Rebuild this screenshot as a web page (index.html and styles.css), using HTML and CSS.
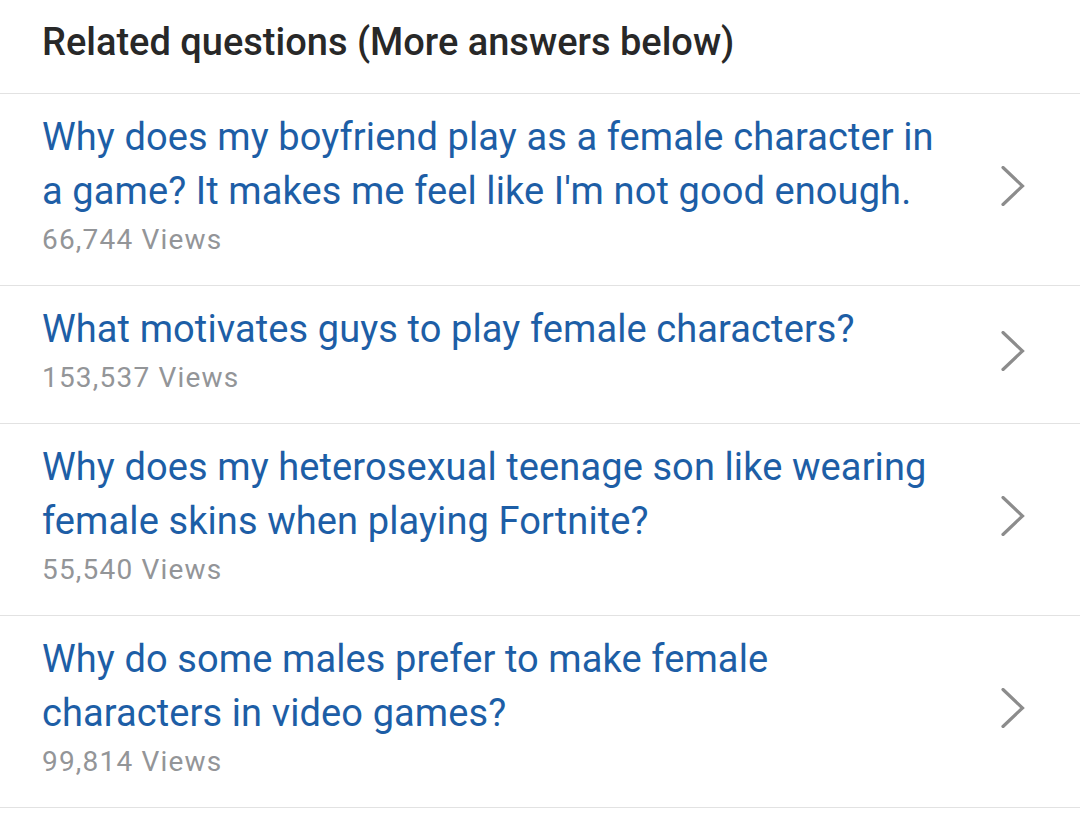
FILE: index.html
```html
<!DOCTYPE html>
<html lang="en">
<head>
    <meta charset="UTF-8">
    <meta name="viewport" content="width=device-width, initial-scale=1.0">
    <title>Related questions</title>
    <link rel="stylesheet" href="styles.css">
</head>
<body>
    <div class="related">
        <h2 class="related-title">Related questions (More answers below)</h2>

        <!-- Question rows -->
        <a class="question" href="#">
            <div class="question-body">
                <div class="question-text">Why does my boyfriend play as a female character in a game? It makes me feel like I'm not good enough.</div>
                <div class="question-views">66,744 Views</div>
            </div>
            <svg class="chevron" width="24" height="40" viewBox="0 0 24 40"><path d="M2 1.5 L21.5 20 L2 38.5" fill="none" stroke="#8c8c8c" stroke-width="3.2" stroke-linecap="round" stroke-linejoin="miter"/></svg>
        </a>

        <a class="question" href="#">
            <div class="question-body">
                <div class="question-text">What motivates guys to play female characters?</div>
                <div class="question-views">153,537 Views</div>
            </div>
            <svg class="chevron" width="24" height="40" viewBox="0 0 24 40"><path d="M2 1.5 L21.5 20 L2 38.5" fill="none" stroke="#8c8c8c" stroke-width="3.2" stroke-linecap="round" stroke-linejoin="miter"/></svg>
        </a>

        <a class="question" href="#">
            <div class="question-body">
                <div class="question-text">Why does my heterosexual teenage son like wearing female skins when playing Fortnite?</div>
                <div class="question-views">55,540 Views</div>
            </div>
            <svg class="chevron" width="24" height="40" viewBox="0 0 24 40"><path d="M2 1.5 L21.5 20 L2 38.5" fill="none" stroke="#8c8c8c" stroke-width="3.2" stroke-linecap="round" stroke-linejoin="miter"/></svg>
        </a>

        <a class="question" href="#">
            <div class="question-body">
                <div class="question-text">Why do some males prefer to make female characters in video games?</div>
                <div class="question-views">99,814 Views</div>
            </div>
            <svg class="chevron" width="24" height="40" viewBox="0 0 24 40"><path d="M2 1.5 L21.5 20 L2 38.5" fill="none" stroke="#8c8c8c" stroke-width="3.2" stroke-linecap="round" stroke-linejoin="miter"/></svg>
        </a>
    </div>
</body>
</html>
```

FILE: styles.css
```css
body {
    font-family: Roboto, "Noto Sans", sans-serif;
    margin: 0;
    background-color: #fff;
}
.related {
    width: 1080px;
}
.related-title {
    margin: 0;
    padding: 16px 42px 0;
    height: 77px;
    font-size: 38px;
    font-weight: 500;
    line-height: 52px;
    color: #282828;
    border-bottom: 1px solid #e2e2e2;
}
.question {
    display: flex;
    align-items: center;
    padding: 16px 55px 23px 42px;
    border-bottom: 1px solid #e2e2e2;
    text-decoration: none;
}
.question-body {
    width: 905px;
}
.question-text {
    font-size: 38px;
    line-height: 54px;
    letter-spacing: 0.1px;
    color: #1d5ea6;
}
.question-views {
    font-size: 28px;
    line-height: 44px;
    letter-spacing: 1.2px;
    color: #939598;
}
.chevron {
    margin-left: auto;
    flex-shrink: 0;
}
```
